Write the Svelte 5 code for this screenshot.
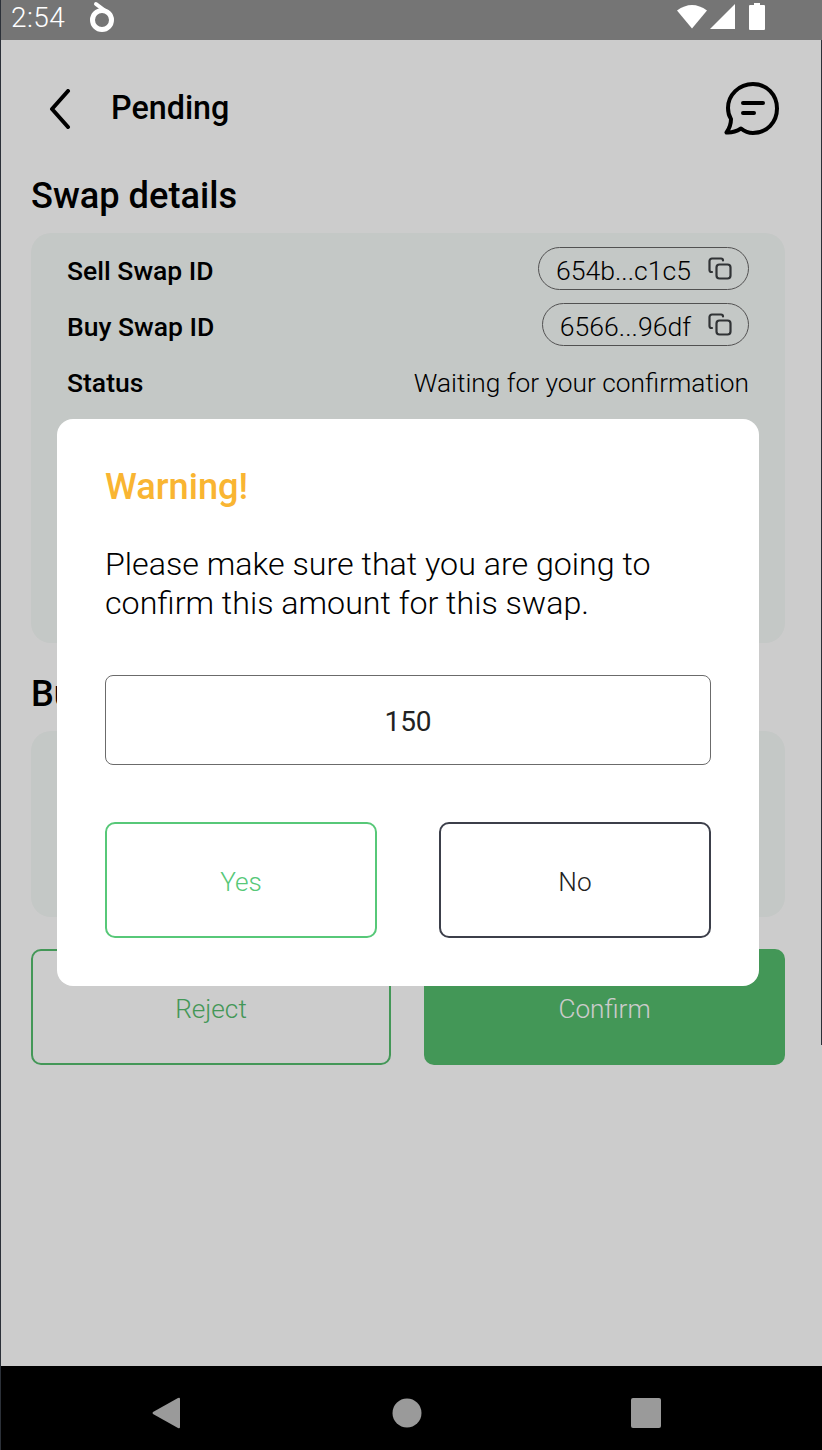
<script>
  const rows = [
    { label: 'Sell Swap ID', chip: '654b...c1c5' },
    { label: 'Buy Swap ID', chip: '6566...96df' },
    { label: 'Status', value: 'Waiting for your confirmation' }
  ];
  let amount = '150';
</script>

<div class="screen">
  <div class="statusbar">
    <span class="time">2:54</span>
    <svg class="app-dot" width="30" height="34" viewBox="0 0 30 34" fill="none">
      <circle cx="13" cy="20" r="9.5" stroke="#fff" stroke-width="5" />
      <path d="M7 4 L15 10" stroke="#fff" stroke-width="4" stroke-linecap="round" />
    </svg>
    <div class="status-icons">
      <svg class="wifi" width="32" height="26" viewBox="0 0 32 26"><path d="M1 7.500 Q16 -3.500 31 7.500 L16 25.500 Z" fill="#fff" /></svg>
      <svg width="27" height="27" viewBox="0 0 27 27"><path d="M26 1 V26 H1 Z" fill="#fff" /></svg>
      <svg width="16" height="27" viewBox="0 0 16 27"><path d="M5 0 H11 V2 H15 Q16 2 16 3 V26 Q16 27 15 27 H1 Q0 27 0 26 V3 Q0 2 1 2 H5 Z" fill="#fff" /></svg>
    </div>
  </div>

  <div class="body">
    <main class="page">
      <header class="topbar">
        <svg class="back" width="24" height="40" viewBox="0 0 24 40" fill="none">
          <path d="M20 2 L4 20 L20 38" stroke="#000" stroke-width="4" stroke-linecap="round" stroke-linejoin="round" />
        </svg>
        <h1>Pending</h1>
        <svg class="chat" width="56" height="56" viewBox="0 0 56 56" fill="none">
          <path d="M29 3 C15 3 4 14 4 27 C4 31 5 35 7 38 C7 42 5 48 2.500 51.500 C8 52 13 50 17 47.500 C20 50 25 52 29 52 C43 52 53 41 53 27.500 C53 14 43 3 29 3 Z" stroke="#000" stroke-width="4" stroke-linejoin="round" />
          <path d="M19 22 H39 M19 32 H30" stroke="#000" stroke-width="4" stroke-linecap="round" />
        </svg>
      </header>

      <h2>Swap details</h2>
      <section class="card first">
        {#each rows as row}
          <div class="row">
            <span class="label">{row.label}</span>
            {#if row.chip}
              <span class="chip">
                <span class="chip-text">{row.chip}</span>
                <svg width="24" height="24" viewBox="0 0 24 24" fill="none">
                  <rect x="8.500" y="7.500" width="14" height="14" rx="3" stroke="#3c4043" stroke-width="2.200" />
                  <path d="M4 15 H3.500 A2 2 0 0 1 1.500 13 V4 A2.500 2.500 0 0 1 4 1.500 H13 A2 2 0 0 1 15 3.500" stroke="#3c4043" stroke-width="2.200" stroke-linecap="round" />
                </svg>
              </span>
            {:else}
              <span class="value">{row.value}</span>
            {/if}
          </div>
        {/each}
      </section>

      <h2 class="second">Buy details</h2>
      <section class="card low"></section>

      <div class="actions">
        <button class="reject">Reject</button>
        <button class="confirm">Confirm</button>
      </div>
    </main>

    <div class="scrim"></div>

    <div class="modal">
      <h3>Warning!</h3>
      <p>Please make sure that you are going to confirm this amount for this swap.</p>
      <div class="amount">{amount}</div>
      <div class="choices">
        <button class="yes">Yes</button>
        <button class="no">No</button>
      </div>
    </div>
  </div>

  <nav class="navbar">
    <svg width="30" height="34" viewBox="0 0 30 34"><path d="M27 2 Q29 1 29 3 V31 Q29 33 27 32 L2 18 Q1 17 2 16 Z" fill="#9a9a9a" /></svg>
    <svg class="home" width="30" height="30" viewBox="0 0 30 30"><circle cx="15" cy="15" r="14.500" fill="#9a9a9a" /></svg>
    <svg width="32" height="32" viewBox="0 0 32 32"><rect x="1" y="1" width="30" height="30" rx="2" fill="#9a9a9a" /></svg>
  </nav>
  <div class="edge"></div>
</div>

<style>
  :global(body) {
    margin: 0;
    background: #fff;
  }
  .screen {
    position: relative;
    width: 822px;
    height: 1450px;
    box-sizing: border-box;
    border-left: 1px solid #2b3038;
    display: flex;
    flex-direction: column;
    overflow: hidden;
    font-family: Roboto, "Liberation Sans", sans-serif;
    color: #000;
  }
  .edge {
    position: absolute;
    top: 40px;
    right: 0;
    width: 1px;
    height: 1005px;
    background: #2b3038;
  }
  .statusbar {
    height: 40px;
    flex: none;
    box-sizing: border-box;
    background: #757575;
    display: flex;
    align-items: center;
    color: #fff;
    padding: 0 57px 6px 10px;
  }
  .time {
    font-size: 28px;
    font-weight: 300;
    letter-spacing: 0.4px;
  }
  .app-dot {
    margin-left: 24px;
  }
  .status-icons {
    margin-left: auto;
    margin-bottom: 2px;
    display: flex;
    align-items: center;
    gap: 13px;
  }
  .wifi {
    margin-right: -12px;
  }
  .body {
    position: relative;
    flex: 1;
  }
  .page {
    height: 100%;
    box-sizing: border-box;
    background: #fff;
    padding: 42px 37px 0 30px;
    display: flex;
    flex-direction: column;
  }
  .topbar {
    height: 54px;
    display: flex;
    align-items: center;
    padding-left: 17px;
  }
  .back {
    margin-right: 39px;
  }
  .chat {
    margin-left: auto;
    margin-right: 5px;
  }
  h1 {
    margin: 0;
    padding-bottom: 2px;
    font-size: 32.3px;
    font-weight: 500;
  }
  h2 {
    margin: 39px 0 16px;
    font-size: 36.2px;
    line-height: 42px;
    font-weight: 500;
  }
  h2.second {
    margin: 30px 0 16px;
  }
  .card {
    background: #f6faf8;
    border-radius: 20px;
    box-sizing: border-box;
    padding: 14px 36px;
  }
  .first {
    height: 410px;
    display: flex;
    flex-direction: column;
    gap: 13px;
  }
  .low {
    height: 186px;
  }
  .row {
    height: 43px;
    display: flex;
    align-items: center;
    justify-content: space-between;
  }
  .label {
    padding-top: 3px;
    font-size: 26.5px;
    font-weight: 500;
  }
  .value {
    padding-top: 5px;
    font-size: 26.3px;
    font-weight: 300;
  }
  .chip {
    height: 43px;
    box-sizing: border-box;
    border: 1px solid #666;
    border-radius: 22px;
    padding: 0 16px 0 17px;
    display: flex;
    align-items: center;
    gap: 17px;
    font-size: 26.6px;
    font-weight: 300;
  }
  .chip-text {
    padding-top: 4px;
  }
  .actions {
    margin-top: 32px;
    display: grid;
    grid-template-columns: 360px 361px;
    justify-content: space-between;
  }
  .actions button {
    height: 116px;
    padding: 3px 0 0;
    border-radius: 10px;
    font-family: inherit;
    font-size: 26.2px;
    font-weight: 300;
  }
  .reject {
    background: transparent;
    border: 2px solid #54bd6d;
    color: #54bd6d;
  }
  .confirm {
    background: #54bd6d;
    border: 0;
    color: #fff;
  }
  .scrim {
    position: absolute;
    inset: 0;
    background: rgba(0, 0, 0, 0.2);
  }
  .modal {
    position: absolute;
    left: 56px;
    top: 379px;
    width: 702px;
    height: 567px;
    box-sizing: border-box;
    padding: 48px;
    background: #fff;
    border-radius: 16px;
  }
  h3 {
    margin: 0;
    font-size: 36.2px;
    line-height: 40px;
    font-weight: 500;
    color: #f9b532;
  }
  p {
    margin: 38px 0 0;
    font-size: 32.2px;
    line-height: 39px;
    font-weight: 300;
    color: #000;
  }
  .amount {
    margin-top: 52px;
    height: 90px;
    padding-top: 2px;
    box-sizing: border-box;
    border: 1px solid #6b6b6b;
    border-radius: 8px;
    display: flex;
    align-items: center;
    justify-content: center;
    font-size: 28px;
    color: #222;
  }
  .choices {
    margin-top: 57px;
    display: flex;
    justify-content: space-between;
  }
  .choices button {
    width: 272px;
    height: 116px;
    padding: 4px 0 0;
    background: #fff;
    border-radius: 10px;
    font-family: inherit;
    font-size: 26.2px;
    font-weight: 300;
  }
  .yes {
    border: 2px solid #57c878;
    color: #57c878;
  }
  .no {
    border: 2px solid #3c3f4a;
    color: #222;
  }
  .navbar {
    height: 84px;
    flex: none;
    background: #000;
    display: flex;
    align-items: center;
    justify-content: space-between;
    padding: 20px 160px 10px 150px;
    box-sizing: border-box;
  }
  .home {
    margin-left: 3px;
  }
</style>
